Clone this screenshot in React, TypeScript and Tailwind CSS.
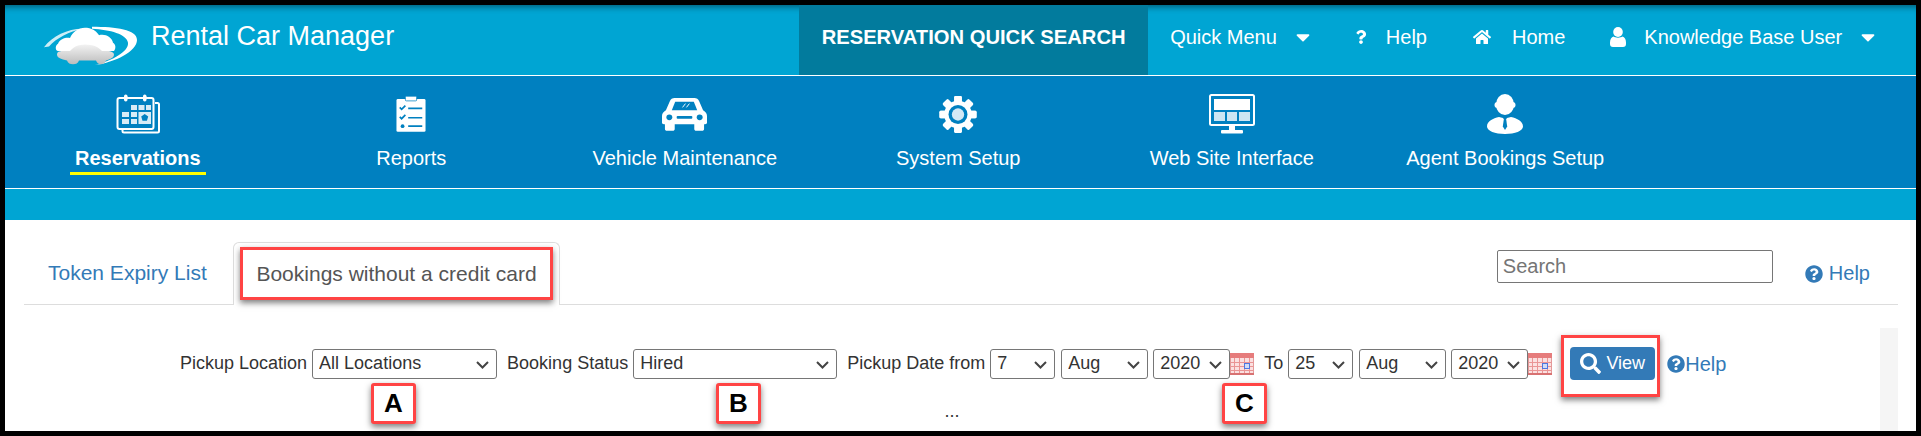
import { FaCaretDown, FaHome, FaQuestion, FaQuestionCircle, FaSearch } from 'react-icons/fa';

// white line icons for the main nav
const CalendarIcon = () => (
  <svg width="44" height="40" viewBox="0 0 44 40" fill="none" stroke="white">
    <rect x="1.5" y="4" width="36" height="31" rx="2" strokeWidth="2" />
    <path d="M39 9h2.5a1.5 1.5 0 0 1 1.500 1.500V37a1.500 1.500 0 0 1-1.500 1.500H8a1.500 1.500 0 0 1-1.500-1.500v-1" strokeWidth="2" />
    <rect x="8" y="0.500" width="3.500" height="7" rx="1.700" fill="white" stroke="none" />
    <rect x="27" y="0.500" width="3.500" height="7" rx="1.700" fill="white" stroke="none" />
    <g fill="white" fillOpacity="0.85" stroke="none">
      <rect x="15" y="11" width="6" height="5" /><rect x="22.500" y="11" width="6" height="5" /><rect x="30" y="11" width="5" height="5" />
      <rect x="6" y="18" width="7" height="5" /><rect x="15" y="18" width="6" height="5" />
      <rect x="6" y="25" width="7" height="5" /><rect x="15" y="25" width="6" height="5" />
      <rect x="22.500" y="18" width="12.500" height="12" />
    </g>
    <path d="M28.700 20l3.500 2.600-1.300 4.200h-4.400l-1.300-4.200z" fill="#0080c0" stroke="none" />
  </svg>
);

const ClipboardIcon = () => (
  <svg width="30" height="36" viewBox="0 0 32 38">
    <rect x="0.500" y="3" width="31" height="35" rx="1.500" fill="white" />
    <rect x="10" y="0" width="12" height="5" rx="1" fill="white" stroke="#0080c0" strokeWidth="0.800" />
    <g stroke="#0080c0" strokeWidth="1.800" fill="none">
      <path d="M4 12l2 2 4-4M4 22l2 2 4-4" />
      <path d="M13 13h15M13 23h15M13 32h15" />
    </g>
    <circle cx="7" cy="32" r="2" fill="#0080c0" />
  </svg>
);

const CarIcon = () => (
  <svg width="45" height="34" viewBox="0 0 46 36" preserveAspectRatio="none">
    <path d="M13 1h20c2.500 0 4 1 5 3.500L42 14c2.500 1.500 4 3.500 4 6v7c0 1-.7 1.800-2 1.800h-1v5c0 1.200-.8 2-2 2h-6c-1.200 0-2-.8-2-2v-5H13v5c0 1.200-.8 2-2 2H5c-1.200 0-2-.8-2-2v-5H2c-1.300 0-2-.8-2-1.800v-7c0-2.500 1.500-4.500 4-6L8 4.500C9 2 10.500 1 13 1z" fill="white" />
    <path d="M13.500 5h19l3.500 9H10z" fill="#0080c0" />
    <circle cx="7.500" cy="21.500" r="3" fill="#0080c0" />
    <circle cx="38.500" cy="21.500" r="3" fill="#0080c0" />
    <rect x="15" y="20" width="16" height="3" rx="1" fill="#0080c0" />
    <path d="M21 11l3-4M25 11l3-4" stroke="white" strokeWidth="1" />
  </svg>
);

const GearIcon = () => (
  <svg width="38" height="39" viewBox="0 0 40 40">
    <g fill="white">
      {[0, 45, 90, 135, 180, 225, 270, 315].map((deg) => (
        <rect key={deg} x="16" y="0.500" width="8" height="39" rx="1.500" transform={`rotate(${deg} 20 20)`} />
      ))}
    </g>
    <circle cx="20" cy="20" r="14.500" fill="white" />
    <circle cx="20" cy="20" r="10" fill="#0080c0" />
    <circle cx="20" cy="20" r="6.500" fill="#d4e9f5" />
  </svg>
);

const MonitorIcon = () => (
  <svg width="46" height="40" viewBox="0 0 46 40" fill="none">
    <rect x="1" y="1" width="44" height="30" rx="1.500" stroke="white" strokeWidth="2" />
    <rect x="5" y="5" width="36" height="11" fill="white" />
    <rect x="5" y="18" width="11" height="9" fill="white" fillOpacity="0.8" />
    <rect x="18" y="18" width="10" height="9" fill="white" fillOpacity="0.8" />
    <rect x="30" y="18" width="11" height="9" fill="white" fillOpacity="0.8" />
    <path d="M20 32h6v4h-6z" fill="white" />
    <rect x="12" y="36" width="22" height="3.500" rx="1" fill="white" />
  </svg>
);

const AgentIcon = () => (
  <svg width="36" height="40" viewBox="0 0 36 40">
    <ellipse cx="18" cy="10.500" rx="9" ry="10.500" fill="white" />
    <rect x="7.500" y="8" width="21" height="6" rx="3" fill="white" />
    <path d="M12 23l4 1 2 3 2-3 4-1c6 1.500 12 4 12 9.500 0 4.500-8 7.500-18 7.500S0 37 0 32.500C0 27 6 24.500 12 23z" fill="white" />
    <path d="M16.800 25.500h2.400l1 7-2.200 3.500-2.200-3.500z" fill="#0080c0" />
  </svg>
);

const UserGlyph = () => (
  <svg width="16" height="20" viewBox="0 0 16 20" className="ml-[45px] shrink-0">
    <ellipse cx="8" cy="5" rx="4.800" ry="5" fill="white" />
    <path d="M3.500 9.500C5 11 11 11 12.500 9.500c2 .5 3.500 2.500 3.500 6V17c0 1.800-1 3-3 3H3c-2 0-3-1.200-3-3v-1.500c0-3.500 1.500-5.500 3.500-6z" fill="white" />
  </svg>
);

const Logo = () => (
  <svg width="94" height="41" viewBox="0 0 94 44" preserveAspectRatio="none">
    <defs>
      <linearGradient id="carFill" x1="0" y1="0" x2="0" y2="1">
        <stop offset="0" stopColor="#f2f2f2" />
        <stop offset="1" stopColor="#bdbdbd" />
      </linearGradient>
    </defs>
    <path d="M0 24C8 12 24 4 38 4c-12 3-26 10-33 19z" fill="white" fillOpacity="0.8" />
    <path d="M48 2c24 0 45 3 45 14 0 12-22 24-42 27 18-5 34-15 33-24C83 10 66 5 48 4z" fill="white" />
    <path d="M14 20c2-5 8-7 12-6 3-8 10-12 17-11 7 1 10 5 12 8 6-2 13 2 14 8 3 2 3 6 1 9H14c-3-1-3-6 0-8z" fill="white" />
    <path d="M13 32c0-3 2-4 6-4h7c3-4 8-7 15-7 8 0 14 3 17 7h5c5 0 7 2 7 4s-2 4-5 5l-3 1c-1 3-3 4-5 4s-4-1-5-4H35c-1 3-3 4-6 4s-5-1-6-4l-4-1c-4-1-6-3-6-5z" fill="url(#carFill)" />
  </svg>
);

const PinkCalendar = () => (
  <svg width="24" height="22" viewBox="0 0 24 22" className="shrink-0">
    <rect x="0.500" y="0.500" width="23" height="21" fill="#fbe0e0" stroke="#e49a9a" />
    <rect x="0" y="0" width="24" height="5" fill="#e67c7c" />
    <rect x="0" y="20" width="24" height="2" fill="#d87272" />
    <path d="M1 9.500h22M1 13.500h22M1 17.500h22M4.500 5v15M9.500 5v15M14.500 5v15M19.500 5v15" stroke="#ea9494" strokeWidth="1" />
    <rect x="14.500" y="10.500" width="5" height="5" fill="#cfdcf8" stroke="#4f78e0" />
  </svg>
);

const Select = ({ value, className }: { value: string; className: string }) => (
  <div className={`relative h-[30px] shrink-0 ${className}`}>
    <select
      defaultValue={value}
      className="h-full w-full appearance-none rounded-[3px] border border-[#767676] bg-white pl-[6px] text-[18px] text-[#333]"
    >
      <option>{value}</option>
    </select>
    <svg width="13" height="8" viewBox="0 0 13 8" fill="none" className="pointer-events-none absolute right-[8px] top-[12px]">
      <path d="M1 1l5.500 5.500L12 1" stroke="#444" strokeWidth="2" />
    </svg>
  </div>
);

const navItems = [
  { label: 'Reservations', icon: <CalendarIcon />, active: true },
  { label: 'Reports', icon: <ClipboardIcon /> },
  { label: 'Vehicle Maintenance', icon: <CarIcon /> },
  { label: 'System Setup', icon: <GearIcon /> },
  { label: 'Web Site Interface', icon: <MonitorIcon /> },
  { label: 'Agent Bookings Setup', icon: <AgentIcon /> },
];

const App = () => {
  return (
    <div className="box-border flex h-[436px] w-full flex-col overflow-hidden border-[5px] border-black bg-white font-['Liberation_Sans',Arial,sans-serif] text-[18px] text-[#333]">
      {/* top bar */}
      <header className="flex h-[70px] shrink-0 bg-[#00a5d3] text-[20px] text-white shadow-[inset_0_7px_6px_-5px_rgba(0,0,0,0.45)]">
        <div className="ml-[39px] mt-[20px] shrink-0">
          <Logo />
        </div>
        <span className="ml-[13px] mt-[15px] text-[27px] leading-[32px]">Rental Car Manager</span>
        <div className="ml-[405px] flex w-[349px] shrink-0 items-center justify-center bg-[#027b9d] pb-[6px] text-[20.2px] font-bold">
          RESERVATION QUICK SEARCH
        </div>
        <div className="flex flex-1 items-center pb-[6px]">
          <span className="ml-[22px]">Quick Menu</span>
          <FaCaretDown className="ml-[15px] shrink-0 text-[22px]" />
          <FaQuestion className="ml-[40px] shrink-0 text-[14px]" />
          <span className="ml-[18px]">Help</span>
          <FaHome className="ml-[46px] shrink-0 text-[18px]" />
          <span className="ml-[21px]">Home</span>
          <UserGlyph />
          <span className="ml-[18px]">Knowledge Base User</span>
          <FaCaretDown className="ml-[15px] shrink-0 text-[22px]" />
        </div>
      </header>

      {/* main nav */}
      <nav className="flex h-[114px] shrink-0 border-y border-white bg-[#0080c0] text-[20px] text-white">
        <div className="-ml-[4px] flex">
          {navItems.map((item) => (
            <div key={item.label} className="flex w-[273.5px] flex-col items-center">
              <div className="mt-[18px] flex h-[40px] items-center">{item.icon}</div>
              <span
                className={
                  item.active
                    ? 'mt-[12px] border-b-[3px] border-[#ffff00] px-[5px] pb-[2px] font-bold leading-[24px]'
                    : 'mt-[12px] leading-[24px]'
                }
              >
                {item.label}
              </span>
            </div>
          ))}
        </div>
      </nav>

      <div className="h-[31px] shrink-0 bg-[#00a5d3]" />

      {/* page body */}
      <main className="relative flex min-h-0 flex-1 flex-col pl-[19px] pr-[18px] pt-[22px]">
        <div className="flex h-[63px] shrink-0 border-b border-[#ddd] text-[20px]">
          <a className="ml-[24px] mt-[15px] w-[161px] shrink-0 whitespace-nowrap text-[21px] text-[#337ab7]">Token Expiry List</a>
          <div className="-mb-px ml-[24px] flex w-[327px] shrink-0 justify-center rounded-t-[6px] border border-b-0 border-[#ddd] bg-white pt-[15px] text-[21px] text-[#555]">
            Bookings without a credit card
          </div>
          <input
            placeholder="Search"
            className="ml-auto mt-[8px] h-[33px] w-[276px] rounded-[2px] border border-[#767676] px-[5px] text-[20px] placeholder:text-[#757575]"
          />
          <a className="ml-[32px] mr-[28px] mt-[20px] flex items-center self-start leading-[23px] text-[#337ab7]">
            <FaQuestionCircle className="mr-[6px] text-[18px]" />
            Help
          </a>
        </div>

        <div className="flex min-h-0 flex-1">
          <div className="flex-1">
            <div className="ml-[156px] mt-[42px] flex h-[33px] items-center">
              <span>Pickup Location</span>
              <Select value="All Locations" className="ml-[5px] w-[185px]" />
              <span className="ml-[10px]">Booking Status</span>
              <Select value="Hired" className="ml-[5px] w-[204px]" />
              <span className="ml-[10px]">Pickup Date from</span>
              <Select value="7" className="ml-[5px] w-[65px]" />
              <Select value="Aug" className="ml-[6px] w-[87px]" />
              <Select value="2020" className="ml-[5px] w-[77px]" />
              <PinkCalendar />
              <span className="ml-[10px]">To</span>
              <Select value="25" className="ml-[5px] w-[65px]" />
              <Select value="Aug" className="ml-[6px] w-[87px]" />
              <Select value="2020" className="ml-[5px] w-[77px]" />
              <PinkCalendar />
              <button className="ml-[18px] flex h-[33px] w-[85px] shrink-0 items-center justify-center rounded-[4px] bg-[#337ab7] text-white">
                <FaSearch className="mr-[5px] text-[21px]" />
                View
              </button>
              <FaQuestionCircle className="ml-[12px] shrink-0 text-[18px] text-[#337ab7]" />
              <a className="text-[20px] text-[#337ab7]">Help</a>
            </div>
            <div className="mt-[19px] text-center leading-[24px]">...</div>
          </div>
          <div className="mt-[23px] w-[18px] shrink-0 bg-[#f5f5f5]" />
        </div>

        {/* annotations drawn over the screenshot */}
        <div className="pointer-events-none absolute left-[235px] top-[27px] h-[53px] w-[313px] border-[3px] border-[#ff4444] shadow-[0_3px_6px_rgba(0,0,0,0.5)]" />
        <div className="pointer-events-none absolute left-[1556px] top-[115px] h-[62px] w-[99px] border-[3px] border-[#ff4444] shadow-[0_3px_6px_rgba(0,0,0,0.5)]" />
        {[
          { letter: 'A', pos: 'left-[366px]' },
          { letter: 'B', pos: 'left-[711px]' },
          { letter: 'C', pos: 'left-[1217px]' },
        ].map((badge) => (
          <div
            key={badge.letter}
            className={`absolute top-[163px] flex h-[41px] w-[45px] items-center justify-center rounded-[3px] border-[3px] border-[#ff4444] bg-white text-[26px] font-bold text-black shadow-[0_3px_6px_rgba(0,0,0,0.5)] ${badge.pos}`}
          >
            {badge.letter}
          </div>
        ))}
      </main>
    </div>
  );
};

export default App;
